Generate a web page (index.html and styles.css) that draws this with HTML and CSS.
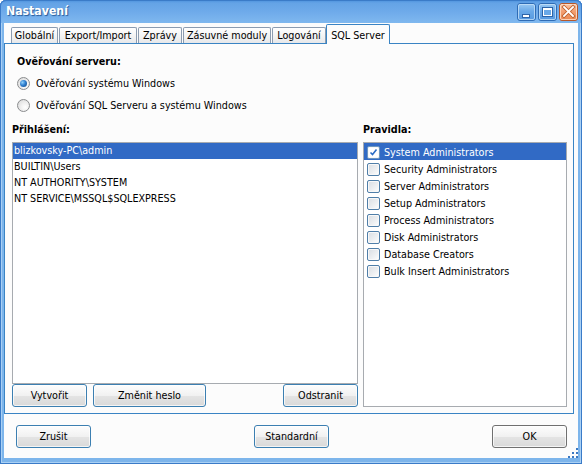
FILE: index.html
```html
<!DOCTYPE html>
<html lang="cs">
<head>
<meta charset="utf-8">
<title>Nastavení</title>
<link rel="stylesheet" href="styles.css">
</head>
<body>
<div class="window">
  <div class="titlebar">
    <span class="title">Nastavení</span>
    <div class="caption-btns">
      <svg class="cbtn" width="19" height="18" viewBox="0 0 19 18">
        <defs><linearGradient id="gmin" x1="0" y1="0" x2="0" y2="1"><stop offset="0" stop-color="#9ccaf3"/><stop offset="0.45" stop-color="#6aa9e8"/><stop offset="1" stop-color="#5598e0"/></linearGradient></defs>
        <rect x="0.5" y="0.5" width="18" height="17" rx="2.5" fill="url(#gmin)" stroke="#2f6cb5"/>
        <rect x="1.5" y="1.5" width="16" height="15" rx="1.5" fill="none" stroke="#c4e0f8" stroke-opacity="0.8"/>
        <rect x="5.5" y="11.5" width="7" height="3" fill="#fff" stroke="#2d64a8"/>
      </svg>
      <svg class="cbtn" width="19" height="18" viewBox="0 0 19 18">
        <defs><linearGradient id="gmax" x1="0" y1="0" x2="0" y2="1"><stop offset="0" stop-color="#9ccaf3"/><stop offset="0.45" stop-color="#6aa9e8"/><stop offset="1" stop-color="#5598e0"/></linearGradient></defs>
        <rect x="0.5" y="0.5" width="18" height="17" rx="2.5" fill="url(#gmax)" stroke="#2f6cb5"/>
        <rect x="1.5" y="1.5" width="16" height="15" rx="1.5" fill="none" stroke="#c4e0f8" stroke-opacity="0.8"/>
        <rect x="4.5" y="4.5" width="10" height="9" fill="none" stroke="#2d64a8"/>
        <rect x="5" y="5" width="9" height="8" fill="#fff"/>
        <rect x="6" y="7" width="7" height="5" fill="#6aa9e8"/>
      </svg>
      <svg class="cbtn" width="19" height="18" viewBox="0 0 19 18">
        <defs><linearGradient id="gcls" x1="0" y1="0" x2="0" y2="1"><stop offset="0" stop-color="#fbc7a6"/><stop offset="0.45" stop-color="#f3a072"/><stop offset="1" stop-color="#ea8750"/></linearGradient></defs>
        <rect x="0.5" y="0.5" width="18" height="17" rx="2.5" fill="url(#gcls)" stroke="#b8582a"/>
        <rect x="1.5" y="1.5" width="16" height="15" rx="1.5" fill="none" stroke="#fde2d0" stroke-opacity="0.8"/>
        <path d="M5 4 L14 13 M14 4 L5 13" stroke="#c0622f" stroke-width="3.6" stroke-linecap="square"/>
        <path d="M5 4 L14 13 M14 4 L5 13" stroke="#fff" stroke-width="1.8" stroke-linecap="square"/>
      </svg>
    </div>
  </div>
  <div class="client">
    <div class="tabs">
      <span class="tab t1">Globální</span>
      <span class="tab t2">Export/Import</span>
      <span class="tab t3">Zprávy</span>
      <span class="tab t4">Zásuvné moduly</span>
      <span class="tab t5">Logování</span>
      <span class="tab active">SQL Server</span>
    </div>
    <div class="panel">
      <div class="auth">
        <div class="label">Ověřování serveru:</div>
        <div class="radio"><span class="radio-dot checked"></span>Ověřování systému Windows</div>
        <div class="radio"><span class="radio-dot"></span>Ověřování SQL Serveru a systému Windows</div>
      </div>
      <div class="columns">
        <div class="col">
          <div class="label">Přihlášení:</div>
          <div class="listbox logins">
            <div class="row sel">blizkovsky-PC\admin</div>
            <div class="row">BUILTIN\Users</div>
            <div class="row">NT AUTHORITY\SYSTEM</div>
            <div class="row">NT SERVICE\MSSQL$SQLEXPRESS</div>
          </div>
          <div class="list-buttons">
            <span class="btn">Vytvořit</span>
            <span class="btn wide">Změnit heslo</span>
            <span class="btn push">Odstranit</span>
          </div>
        </div>
        <div class="col">
          <div class="label">Pravidla:</div>
          <div class="listbox rules">
            <div class="rrow sel"><span class="check checked"><svg width="11" height="11" viewBox="0 0 11 11"><path d="M2.5 5.5 L4.5 7.5 L8.5 2.5" fill="none" stroke="#2b6cc4" stroke-width="1.6"/></svg></span>System Administrators</div>
            <div class="rrow"><span class="check"></span>Security Administrators</div>
            <div class="rrow"><span class="check"></span>Server Administrators</div>
            <div class="rrow"><span class="check"></span>Setup Administrators</div>
            <div class="rrow"><span class="check"></span>Process Administrators</div>
            <div class="rrow"><span class="check"></span>Disk Administrators</div>
            <div class="rrow"><span class="check"></span>Database Creators</div>
            <div class="rrow"><span class="check"></span>Bulk Insert Administrators</div>
          </div>
        </div>
      </div>
    </div>
    <div class="footer">
      <span class="btn">Zrušit</span>
      <span class="btn">Standardní</span>
      <span class="btn default">OK</span>
    </div>
    <svg class="grip" width="10" height="10" viewBox="0 0 10 10">
      <g fill="#3b78c2">
        <rect x="8" y="0" width="2" height="2"/>
        <rect x="4" y="4" width="2" height="2"/><rect x="8" y="4" width="2" height="2"/>
        <rect x="0" y="8" width="2" height="2"/><rect x="4" y="8" width="2" height="2"/><rect x="8" y="8" width="2" height="2"/>
      </g>
    </svg>
  </div>
</div>
</body>
</html>
```
FILE: styles.css
```css
* { box-sizing: border-box; }
html, body { margin: 0; padding: 0; }
body {
  width: 582px;
  height: 464px;
  overflow: hidden;
  background: #ffffff;
  font-family: "DejaVu Sans Condensed", "Liberation Sans", Arial, sans-serif;
  font-size: 10.7px;
  color: #000;
}
.window {
  width: 582px;
  height: 464px;
  display: flex;
  flex-direction: column;
  padding: 0 4px 6px 4px;
  background: #7db5eb;
  box-shadow: inset 0 0 0 1px #3a7bc8, inset 0 0 0 2px #a9d0f4;
  border-radius: 6px 6px 0 0;
}
.titlebar {
  height: 23px;
  margin: 0 -4px;
  display: flex;
  align-items: center;
  justify-content: space-between;
  padding: 0 4px 0 6px;
  border-radius: 6px 6px 0 0;
  background: linear-gradient(#4a90dc 0, #64a3e6 3px, #6eaaea 50%, #7fb8ef 100%);
  box-shadow: inset 0 1px 0 #3a7bc8, inset 1px 0 0 #3a7bc8, inset -1px 0 0 #3a7bc8;
}
.title {
  color: #fff;
  font-weight: bold;
  font-size: 12.2px;
  line-height: 23px;
  text-shadow: 1px 1px 1px #255a99;
}
.caption-btns {
  display: flex;
  gap: 2px;
  margin-top: 1px;
}
.cbtn { display: block; }
.client {
  flex: 1;
  position: relative;
  background: #fcfcfc;
  display: flex;
  flex-direction: column;
  padding-top: 1px;
}
.tabs {
  height: 19px;
  display: flex;
  align-items: flex-end;
  gap: 1px;
  padding-left: 7px;
  position: relative;
  z-index: 1;
}
.tab {
  height: 16px;
  border: 1px solid #8c9cb0;
  border-bottom: none;
  border-radius: 2px 2px 0 0;
  background: linear-gradient(#ffffff, #f4f4f4 50%, #e7e8ea);
  display: flex;
  align-items: flex-end;
  justify-content: center;
  line-height: 13px;
  padding-bottom: 1px;
  white-space: nowrap;
}
.t1 { width: 47px; }
.t2 { width: 78px; }
.t3 { width: 44px; }
.t4 { width: 88px; }
.t5 { width: 54px; }
.tab.active {
  width: 64px;
  height: 20px;
  margin-left: -1px;
  margin-bottom: -1px;
  border-color: #3a84c4;
  background: #fcfcfc;
  padding-bottom: 2px;
}
.panel {
  height: 371px;
  margin-right: 4px;
  border: 1px solid #3a84c4;
  background: #fcfcfc;
  padding: 11px 6px 6px 7px;
  display: flex;
  flex-direction: column;
}
.label {
  font-weight: bold;
  line-height: 13px;
  height: 13px;
}
.auth {
  margin-left: 5px;
}
.radio {
  display: flex;
  align-items: center;
  height: 13px;
  line-height: 13px;
  margin-top: 9px;
}
.radio-dot {
  width: 13px;
  height: 13px;
  border-radius: 50%;
  border: 1px solid #8a8c8e;
  background: radial-gradient(circle at 65% 65%, #ffffff 0, #f2f2f2 35%, #d6d6d6 100%);
  margin-right: 6px;
  position: relative;
  flex: none;
}
.radio-dot.checked::after {
  content: "";
  position: absolute;
  left: 2px;
  top: 2px;
  width: 7px;
  height: 7px;
  border-radius: 50%;
  background: radial-gradient(circle at 35% 35%, #8fd0fa 0, #2f7fd0 45%, #14467f 100%);
}
.columns {
  margin-top: 11px;
  flex: 1;
  display: grid;
  grid-template-columns: 346px 204px;
  column-gap: 5px;
}
.col {
  display: flex;
  flex-direction: column;
}
.col .label { margin-bottom: 6px; }
.listbox {
  flex: 1;
  border: 1px solid #a7abb0;
  background: #ffffff;
}
.row {
  height: 16px;
  line-height: 16px;
  padding-left: 1px;
  white-space: nowrap;
}
.sel {
  background: #316ac5;
  color: #ffffff;
}
.rrow {
  height: 17px;
  display: flex;
  align-items: center;
  padding-left: 3px;
  padding-top: 1px;
  white-space: nowrap;
}
.check {
  width: 13px;
  height: 13px;
  border: 1px solid #4f7ea8;
  border-radius: 2px;
  background: linear-gradient(135deg, #d9dde2 0, #eef0f2 60%, #ffffff 100%);
  box-shadow: inset 0 0 0 1px #f8f8f8;
  margin-right: 4px;
  display: flex;
  align-items: center;
  justify-content: center;
  flex: none;
}
.check.checked {
  background: #ffffff;
  border-color: #6b95bf;
}
.check svg { display: block; }
.list-buttons {
  display: flex;
  height: 23px;
}
.btn {
  width: 75px;
  height: 23px;
  border: 1px solid #3c7fb1;
  border-radius: 3px;
  background: linear-gradient(#fdfdfd 0, #f1f1f1 50%, #e4e4e4 51%, #d9d9d9 100%);
  box-shadow: inset 0 0 0 1px rgba(255,255,255,0.7);
  display: flex;
  align-items: center;
  justify-content: center;
  line-height: 13px;
  white-space: nowrap;
}
.list-buttons .btn + .btn { margin-left: 6px; }
.btn.wide { width: 113px; }
.btn.push { margin-left: auto !important; }
.btn.default { border-color: #707070; }
.footer {
  flex: 1;
  display: grid;
  grid-template-columns: 1fr 1fr 1fr;
  align-items: start;
  padding: 11px 11px 0 12px;
}
.footer .btn:nth-child(2) { justify-self: center; }
.footer .btn:nth-child(3) { justify-self: end; }
.grip {
  position: absolute;
  right: 0;
  bottom: 0;
}
```
